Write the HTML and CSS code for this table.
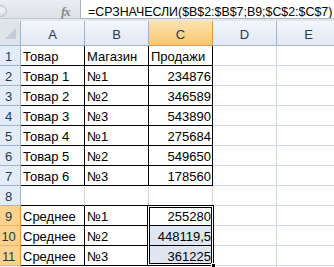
FILE: index.html
```html
<!DOCTYPE html>
<html>
<head>
<meta charset="utf-8">
<link rel="stylesheet" href="styles.css">
</head>
<body>
<div class="app">
  <div class="topbar">
    <div class="namepanel">
      <span class="knob"></span>
      <span class="fx">fx</span>
    </div>
    <div class="formula">=СРЗНАЧЕСЛИ($B$2:$B$7;B9;$C$2:$C$7)</div>
  </div>
  <div class="sheet">
    <div class="corner"><svg width="20" height="24" viewBox="0 0 20 24"><polygon points="16,7 16,18 5,18" fill="#c4ccd8"/></svg></div>
    <div class="colh">A</div>
    <div class="colh">B</div>
    <div class="colh selh">C</div>
    <div class="colh">D</div>
    <div class="colh last">E</div>

    <div class="rowh">1</div>
    <div class="c tb">Товар</div>
    <div class="c tb">Магазин</div>
    <div class="c tb">Продажи</div>
    <div class="c"></div><div class="c"></div>

    <div class="rowh">2</div>
    <div class="c tb">Товар 1</div>
    <div class="c tb">№1</div>
    <div class="c tb num">234876</div>
    <div class="c"></div><div class="c"></div>

    <div class="rowh">3</div>
    <div class="c tb">Товар 2</div>
    <div class="c tb">№2</div>
    <div class="c tb num">346589</div>
    <div class="c"></div><div class="c"></div>

    <div class="rowh">4</div>
    <div class="c tb">Товар 3</div>
    <div class="c tb">№3</div>
    <div class="c tb num">543890</div>
    <div class="c"></div><div class="c"></div>

    <div class="rowh">5</div>
    <div class="c tb">Товар 4</div>
    <div class="c tb">№1</div>
    <div class="c tb num">275684</div>
    <div class="c"></div><div class="c"></div>

    <div class="rowh">6</div>
    <div class="c tb">Товар 5</div>
    <div class="c tb">№2</div>
    <div class="c tb num">549650</div>
    <div class="c"></div><div class="c"></div>

    <div class="rowh">7</div>
    <div class="c tb">Товар 6</div>
    <div class="c tb">№3</div>
    <div class="c tb num">178560</div>
    <div class="c"></div><div class="c"></div>

    <div class="rowh">8</div>
    <div class="c bb"></div>
    <div class="c bb"></div>
    <div class="c bb"></div>
    <div class="c"></div><div class="c"></div>

    <div class="rowh selr">9</div>
    <div class="c tb">Среднее</div>
    <div class="c tb">№1</div>
    <div class="c tb num">255280</div>
    <div class="c"></div><div class="c"></div>

    <div class="rowh selr">10</div>
    <div class="c tb">Среднее</div>
    <div class="c tb">№2</div>
    <div class="c tb num tint">448119,5</div>
    <div class="c"></div><div class="c"></div>

    <div class="rowh selr">11</div>
    <div class="c tb">Среднее</div>
    <div class="c tb">№3</div>
    <div class="c tb num tint">361225</div>
    <div class="c"></div><div class="c"></div>

    <div class="rowh"></div>
    <div class="c"></div><div class="c"></div><div class="c"></div><div class="c"></div><div class="c"></div>

    <div class="selection"><span class="handle"></span></div>
  </div>
</div>
</body>
</html>
```

FILE: styles.css
```css
* { box-sizing: border-box; }
html, body {
  margin: 0;
  padding: 0;
  width: 334px;
  height: 267px;
  overflow: hidden;
  background: #fff;
}
.app {
  font-family: "Liberation Sans", Arial, sans-serif;
  font-size: 13px;
  color: #000;
  width: 334px;
}
.topbar {
  display: flex;
  height: 21px;
  background: #e3e7ec;
}
.namepanel {
  position: relative;
  width: 80px;
  height: 19px;
  background: linear-gradient(#eaedf1, #dce1e7);
  border-bottom: 1px solid #c3cad4;
}
.knob {
  position: absolute;
  left: -5px;
  top: 5px;
  width: 12px;
  height: 12px;
  border-radius: 50%;
  background: radial-gradient(circle at 60% 40%, #f4f5f7, #c8cdd4);
  border: 1px solid #b9c0c9;
}
.fx {
  position: absolute;
  left: 61px;
  top: 5px;
  font-family: "Liberation Serif", serif;
  font-style: italic;
  font-weight: bold;
  font-size: 13px;
  line-height: 13px;
  color: #858a92;
  letter-spacing: -1px;
}
.formula {
  flex: 1;
  height: 19px;
  background: #fff;
  border-left: 1px solid #a9b3c0;
  border-bottom: 1px solid #a9b3c0;
  padding-left: 7px;
  font-size: 12.4px;
  line-height: 24px;
  white-space: nowrap;
  overflow: hidden;
}
.sheet {
  position: relative;
  display: grid;
  grid-template-columns: 21px repeat(5, 64px);
  grid-template-rows: 25px repeat(12, 20px);
}
.corner {
  background: #dfe4eb;
  border-right: 1px solid #9eb6ce;
  border-bottom: 1px solid #9eb6ce;
}
.corner svg { display: block; }
.colh {
  background: linear-gradient(#f3f6fb, #e1e8f3);
  border-right: 1px solid #9eb6ce;
  border-bottom: 1px solid #9eb6ce;
  color: #233a5b;
  text-align: center;
  line-height: 28px;
}
.colh.selh {
  background: linear-gradient(#fbe2b0, #f7c86f);
  border-right-color: #f29536;
  border-bottom-color: #f29536;
  color: #233a5b;
}
.rowh {
  background: #e4ecf7;
  border-right: 1px solid #9eb6ce;
  border-bottom: 1px solid #9eb6ce;
  color: #233a5b;
  text-align: center;
  padding-right: 3px;
  line-height: 22px;
  letter-spacing: -0.3px;
}
.rowh.selr {
  background: #fcd38e;
  border-right-color: #f29536;
  border-bottom-color: #f2b267;
}
.c {
  border-right: 1px solid #d0d7e5;
  border-bottom: 1px solid #d0d7e5;
  padding: 0 2px;
  line-height: 22px;
  white-space: nowrap;
  overflow: visible;
}
.c.tb {
  border-right-color: #000;
  border-bottom-color: #000;
}
.c.bb {
  border-bottom-color: #000;
}
.c.num {
  text-align: right;
  padding-right: 1px;
}
.c.tint {
  background: #dfe6f1;
}
.selection {
  position: absolute;
  grid-column: 4 / 5;
  grid-row: 10 / 13;
  left: -2px;
  top: -1px;
  right: -1px;
  bottom: 0;
  border: 1px solid #000;
  box-shadow: inset 0 0 0 1px #fff, inset 0 0 0 2px #000;
  pointer-events: none;
}
.handle {
  position: absolute;
  right: -3px;
  bottom: -3px;
  width: 5px;
  height: 5px;
  background: #000;
  border: 1px solid #fff;
}
```
